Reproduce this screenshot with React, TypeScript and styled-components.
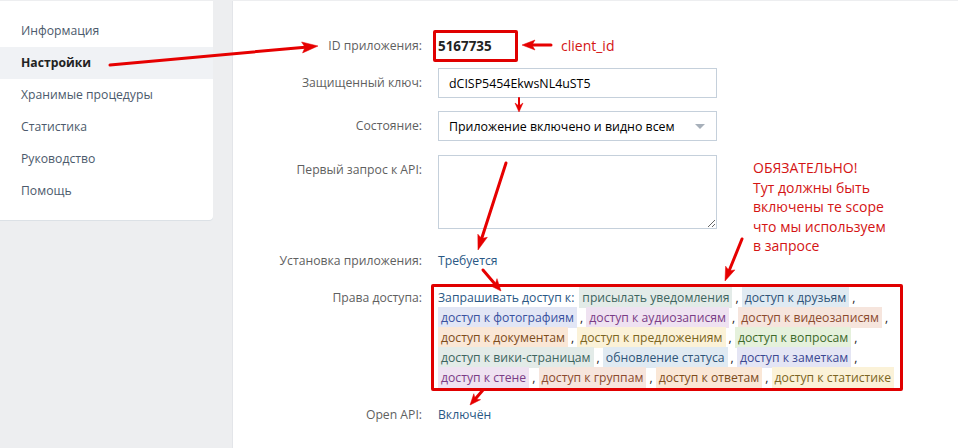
import React from "react";
import styled, { createGlobalStyle } from "styled-components";

const GlobalStyle = createGlobalStyle`
  html, body { margin: 0; padding: 0; }
  body {
    background: #edeef0;
    font-family: "Open Sans", "Noto Sans", Arial, sans-serif;
    font-size: 12px;
    -webkit-font-smoothing: antialiased;
  }
`;

const Page = styled.div`
  position: relative;
  display: flex;
  align-items: flex-start;
  gap: 19px;
  padding-top: 1px;
  width: 958px;
  height: 448px;
  box-sizing: border-box;
  overflow: hidden;
`;

const Sidebar = styled.nav`
  width: 213px;
  flex: none;
  background: #fff;
  border-radius: 0 0 4px 0;
  box-shadow: 0 1px 0 #dce1e6;
  padding: 14px 0 13px;
  box-sizing: border-box;
`;

const NavItem = styled.div<{ $active?: boolean }>`
  height: 32px;
  line-height: 32px;
  padding-left: 21px;
  font-size: 12.2px;
  color: ${(p) => (p.$active ? "#222" : "#4c5a6c")};
  font-weight: ${(p) => (p.$active ? 700 : 400)};
  background: ${(p) => (p.$active ? "#f0f2f5" : "transparent")};
`;

const Main = styled.main`
  flex: 1;
  align-self: stretch;
  background: #fff;
  border-left: 1px solid #e3e5e9;
`;

const Form = styled.div`
  display: flex;
  flex-direction: column;
`;

const Row = styled.div<{ $top: number; $align?: string }>`
  display: grid;
  grid-template-columns: 189px 1fr;
  column-gap: 16px;
  align-items: ${(p) => p.$align || "center"};
  margin-top: ${(p) => p.$top}px;
`;

const Label = styled.div<{ $pad?: number }>`
  text-align: right;
  color: #5f5f5f;
  font-size: 12.2px;
  line-height: 20px;
  padding-top: ${(p) => p.$pad || 0}px;
`;

const Value = styled.div`
  display: flex;
  align-items: center;
  color: #2a5885;
  font-size: 12.2px;
  line-height: 20px;
`;

const IdFrame = styled.div`
  box-sizing: border-box;
  width: 85px;
  height: 32px;
  margin-left: -5px;
  border: 3px solid #e00000;
  border-radius: 2px;
  padding-left: 2px;
  display: flex;
  align-items: center;
  font-weight: 700;
  font-size: 13.4px;
  color: #222;
`;

const Note = styled.span`
  color: #d41414;
  font-size: 14px;
  margin-left: 43px;
`;

const Input = styled.div`
  box-sizing: border-box;
  width: 279px;
  height: 30px;
  border: 1px solid #c5d0db;
  padding: 0 10px;
  display: flex;
  align-items: center;
  color: #000;
  font-size: 12.4px;
`;

const Select = styled(Input)`
  height: 30px;
  justify-content: space-between;
  padding-right: 11px;
`;

const Caret = styled.span`
  width: 0;
  height: 0;
  border-left: 5px solid transparent;
  border-right: 5px solid transparent;
  border-top: 5px solid #a7b0ba;
`;

const TextArea = styled.textarea`
  box-sizing: border-box;
  width: 279px;
  height: 74px;
  border: 1px solid #c5d0db;
  border-radius: 0;
  margin: 0;
  display: block;
  font-family: inherit;
  font-size: 12px;
  resize: both;
`;

const ScopeFrame = styled.div`
  box-sizing: border-box;
  width: 472px;
  margin-left: -7px;
  border: 3px solid #e00000;
  border-radius: 2px;
  padding: 1px 4px 0;
  line-height: 20px;
  color: #2a5885;
  font-size: 12.2px;
`;

const tagColors: Record<string, [string, string]> = {
  teal: ["#e3ebe8", "#3d6560"],
  blue: ["#e0eaf2", "#2f5478"],
  indigo: ["#e2e6f5", "#3a52a0"],
  purple: ["#efe2f1", "#7a3d86"],
  peach: ["#f6e5dd", "#8b4a2e"],
  orange: ["#fae7d6", "#7d4c1c"],
  yellow: ["#fbf2d8", "#7b6521"],
  green: ["#e5f1dc", "#3d6a2b"],
  lavender: ["#e4e5f4", "#3b4892"],
};

const Tag = styled.span<{ $c: string }>`
  white-space: nowrap;
  padding: 2px 3px;
  background: ${(p) => tagColors[p.$c][0]};
  color: ${(p) => tagColors[p.$c][1]};
`;

const Sep = styled.span`
  color: #222;
  margin-left: 3px;
`;

const Lead = styled.span`
  margin-right: 5px;
`;

const BigNote = styled.div`
  position: absolute;
  left: 753px;
  top: 158px;
  color: #d41414;
  font-size: 14px;
  line-height: 19.5px;
  white-space: pre;
`;

const Overlay = styled.svg`
  position: absolute;
  left: 0;
  top: 0;
  pointer-events: none;
`;

const scopes: [string, string][] = [
  ["присылать уведомления", "teal"],
  ["доступ к друзьям", "blue"],
  ["доступ к фотографиям", "indigo"],
  ["доступ к аудиозаписям", "purple"],
  ["доступ к видеозаписям", "peach"],
  ["доступ к документам", "orange"],
  ["доступ к предложениям", "yellow"],
  ["доступ к вопросам", "green"],
  ["доступ к вики-страницам", "teal"],
  ["обновление статуса", "blue"],
  ["доступ к заметкам", "lavender"],
  ["доступ к стене", "purple"],
  ["доступ к группам", "peach"],
  ["доступ к ответам", "orange"],
  ["доступ к статистике", "yellow"],
];

type ArrowProps = { x1: number; y1: number; x2: number; y2: number; w?: number; hl?: number; hw?: number };

function Arrow({ x1, y1, x2, y2, w = 3, hl = 13, hw = 10 }: ArrowProps) {
  const dx = x2 - x1;
  const dy = y2 - y1;
  const len = Math.hypot(dx, dy);
  const ux = dx / len;
  const uy = dy / len;
  const bx = x2 - ux * hl;
  const by = y2 - uy * hl;
  const px = -uy * (hw / 2);
  const py = ux * (hw / 2);
  const pts = `${x2},${y2} ${bx + px},${by + py} ${bx + ux * 3},${by + uy * 3} ${bx - px},${by - py}`;
  return (
    <g fill="#e60000" stroke="#e60000">
      <line x1={x1} y1={y1} x2={bx + ux * 3} y2={by + uy * 3} strokeWidth={w} strokeLinecap="round" />
      <polygon points={pts} strokeWidth={0.5} strokeLinejoin="round" />
    </g>
  );
}

export default function App() {
  return (
    <>
      <GlobalStyle />
      <Page>
        <Sidebar>
          <NavItem>Информация</NavItem>
          <NavItem $active>Настройки</NavItem>
          <NavItem>Хранимые процедуры</NavItem>
          <NavItem>Статистика</NavItem>
          <NavItem>Руководство</NavItem>
          <NavItem>Помощь</NavItem>
        </Sidebar>
        <Main>
          <Form>
            <Row $top={29}>
              <Label>ID приложения:</Label>
              <Value>
                <IdFrame>5167735</IdFrame>
                <Note>client_id</Note>
              </Value>
            </Row>
            <Row $top={6}>
              <Label>Защищенный ключ:</Label>
              <Input>dCISP5454EkwsNL4uST5</Input>
            </Row>
            <Row $top={13}>
              <Label>Состояние:</Label>
              <Select>
                <span>Приложение включено и видно всем</span>
                <Caret />
              </Select>
            </Row>
            <Row $top={14} $align="start">
              <Label $pad={5}>Первый запрос к API:</Label>
              <TextArea />
            </Row>
            <Row $top={22}>
              <Label>Установка приложения:</Label>
              <Value>Требуется</Value>
            </Row>
            <Row $top={13} $align="start">
              <Label $pad={4}>Права доступа:</Label>
              <ScopeFrame>
                <Lead>Запрашивать доступ к:</Lead>
                {scopes.map(([t, c], i) => (
                  <React.Fragment key={t}>
                    <Tag $c={c}>{t}</Tag>
                    {i < scopes.length - 1 ? <Sep>, </Sep> : null}
                  </React.Fragment>
                ))}
              </ScopeFrame>
            </Row>
            <Row $top={14}>
              <Label>Open API:</Label>
              <Value>Включён</Value>
            </Row>
          </Form>
        </Main>
        <BigNote>{"ОБЯЗАТЕЛЬНО!\nТут должны быть\nвключены те scope\nчто мы используем\nв запросе"}</BigNote>
        <Overlay width={958} height={448} viewBox="0 0 958 448">
          <Arrow x1={110} y1={65} x2={318} y2={46} w={3} hl={16} hw={11} />
          <Arrow x1={551} y1={45} x2={522} y2={45} w={3} hl={13} hw={10} />
          <Arrow x1={519} y1={98} x2={519} y2={112} w={2} hl={9} hw={8} />
          <Arrow x1={506} y1={163} x2={478} y2={250} w={3} hl={15} hw={10} />
          <Arrow x1={483} y1={270} x2={501} y2={291} w={3} hl={12} hw={10} />
          <Arrow x1={742} y1={239} x2={725} y2={281} w={3} hl={14} hw={10} />
          <Arrow x1={483} y1={390} x2={470} y2={405} w={3} hl={11} hw={9} />
        </Overlay>
      </Page>
    </>
  );
}
